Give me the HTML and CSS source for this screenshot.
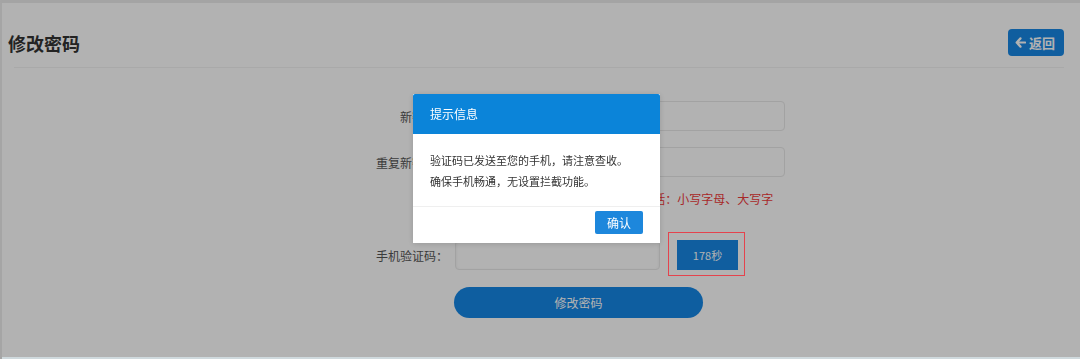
FILE: index.html
```html
<!DOCTYPE html>
<html lang="zh-CN">
<head>
<meta charset="utf-8">
<title>修改密码</title>
<link rel="stylesheet" href="styles.css">
</head>
<body>
<div class="page">
  <header class="head">
    <h1 class="title">修改密码</h1>
    <button class="back" type="button">
      <svg class="back-icon" width="11" height="11" viewBox="0 0 12 12"><path d="M6 1.5 L1.8 6 L6 10.5 M2 6 H11" fill="none" stroke="#fff" stroke-width="2.4" stroke-linecap="round" stroke-linejoin="round"/></svg>返回
    </button>
  </header>
  <div class="divider"></div>
  <form class="form">
    <div class="row">
      <label class="label">新密码：</label>
      <input class="input" type="password">
    </div>
    <div class="row">
      <label class="label">重复新密码：</label>
      <input class="input" type="password">
    </div>
    <div class="row hint-row">
      <span class="label"></span>
      <p class="hint">密码由8-16位字符组成，且必须同时包括：小写字母、大写字</p>
    </div>
    <div class="row code-row">
      <label class="label">手机验证码：</label>
      <input class="input short" type="text">
      <span class="code-wrap"><button class="code-btn" type="button">178秒</button></span>
    </div>
    <div class="row submit-row">
      <span class="label"></span>
      <button class="submit" type="button">修改密码</button>
    </div>
  </form>
  <div class="foot-line"></div>
</div>
<div class="mask"></div>
<div class="dialog">
  <div class="dialog-head">提示信息</div>
  <div class="dialog-body">
    <p>验证码已发送至您的手机，请注意查收。</p>
    <p>确保手机畅通，无设置拦截功能。</p>
  </div>
  <div class="dialog-foot">
    <button class="ok" type="button">确认</button>
  </div>
</div>
</body>
</html>
```
FILE: styles.css
```css
* { box-sizing: border-box; }
html, body { margin: 0; padding: 0; }
body {
  font-family: "Noto Sans CJK SC", "Microsoft YaHei", sans-serif;
  background: #fff;
  color: #333;
  height: 359px;
  overflow: hidden;
}
.page {
  height: 359px;
  display: flex;
  flex-direction: column;
  border-top: 3px solid #ebebeb;
  border-left: 2px solid #ececec;
}
.head {
  height: 64px;
  padding: 15px 16px 0 6px;
  display: flex;
  align-items: center;
  justify-content: space-between;
}
.title {
  margin: 0;
  font-size: 18px;
  font-weight: 700;
  color: #333;
  line-height: 24px;
}
.back {
  display: flex;
  align-items: center;
  gap: 3px;
  height: 27px;
  width: 56px;
  padding: 0 0 0 7px;
  border: none;
  border-radius: 4px;
  background: #1787e4;
  color: #fff;
  font-family: inherit;
  font-size: 13px;
  font-weight: 700;
}
.divider {
  height: 1px;
  margin: 0 16px 0 12px;
  background: #f2f2f2;
}
.form {
  margin: 33px 0 0;
  display: flex;
  flex-direction: column;
}
.row {
  display: flex;
  align-items: center;
}
.row + .row { margin-top: 16px; }
.label {
  width: 446px;
  flex: none;
  text-align: right;
  padding-right: 0;
  font-size: 12px;
  color: #555;
}
.input {
  margin-left: 7px;
  width: 330px;
  height: 30px;
  border: 1px solid #e8e8e8;
  border-radius: 4px;
  background: #fff;
}
.input.short {
  width: 205px;
  box-shadow: inset 0 1px 3px rgba(0,0,0,0.08);
}
.hint-row { margin-top: 15px !important; }
.hint {
  margin: 0 0 0 1px;
  font-size: 12px;
  line-height: 14px;
  color: #f03a3a;
  white-space: nowrap;
}
.code-row { margin-top: 34px !important; }
.code-wrap {
  position: relative;
  margin-left: 17px;
  display: flex;
}
.code-wrap::after {
  content: "";
  position: absolute;
  left: -9px;
  top: -8px;
  right: -7px;
  bottom: -6px;
  border: 1.5px solid #e4434d;
  z-index: 20;
}
.code-btn {
  width: 61px;
  height: 30px;
  border: none;
  background: #1787e4;
  color: #fff;
  font-family: inherit;
  font-size: 11px;
}
.submit-row { margin-top: 17px !important; }
.submit {
  margin-left: 6px;
  width: 249px;
  height: 31px;
  border: none;
  border-radius: 16px;
  background: #1587e6;
  color: #fff;
  font-family: inherit;
  font-size: 12px;
}
.foot-line {
  margin-top: auto;
  height: 2px;
  background: #cfd9dd;
  position: relative;
  z-index: 20;
}
.mask {
  position: fixed;
  inset: 0;
  background: rgba(0,0,0,0.3);
  z-index: 10;
}
.dialog {
  position: fixed;
  left: 413px;
  top: 94px;
  width: 247px;
  background: #fff;
  z-index: 15;
  box-shadow: 0 1px 6px rgba(0,0,0,0.15);
}
.dialog-head {
  height: 40px;
  line-height: 40px;
  padding-left: 17px;
  background: #0b84d9;
  color: #fff;
  font-size: 12px;
  border-radius: 2px 2px 0 0;
}
.dialog-body {
  padding: 16px 17px 14px;
  font-size: 11px;
  line-height: 21px;
  color: #333;
}
.dialog-body p { margin: 0; }
.dialog-foot {
  border-top: 1px solid #efefef;
  padding: 4px 17px 9px;
  display: flex;
  justify-content: flex-end;
}
.ok {
  width: 48px;
  height: 23px;
  border: none;
  border-radius: 2px;
  background: #1d87dc;
  color: #fff;
  font-family: inherit;
  font-size: 12px;
}
```
